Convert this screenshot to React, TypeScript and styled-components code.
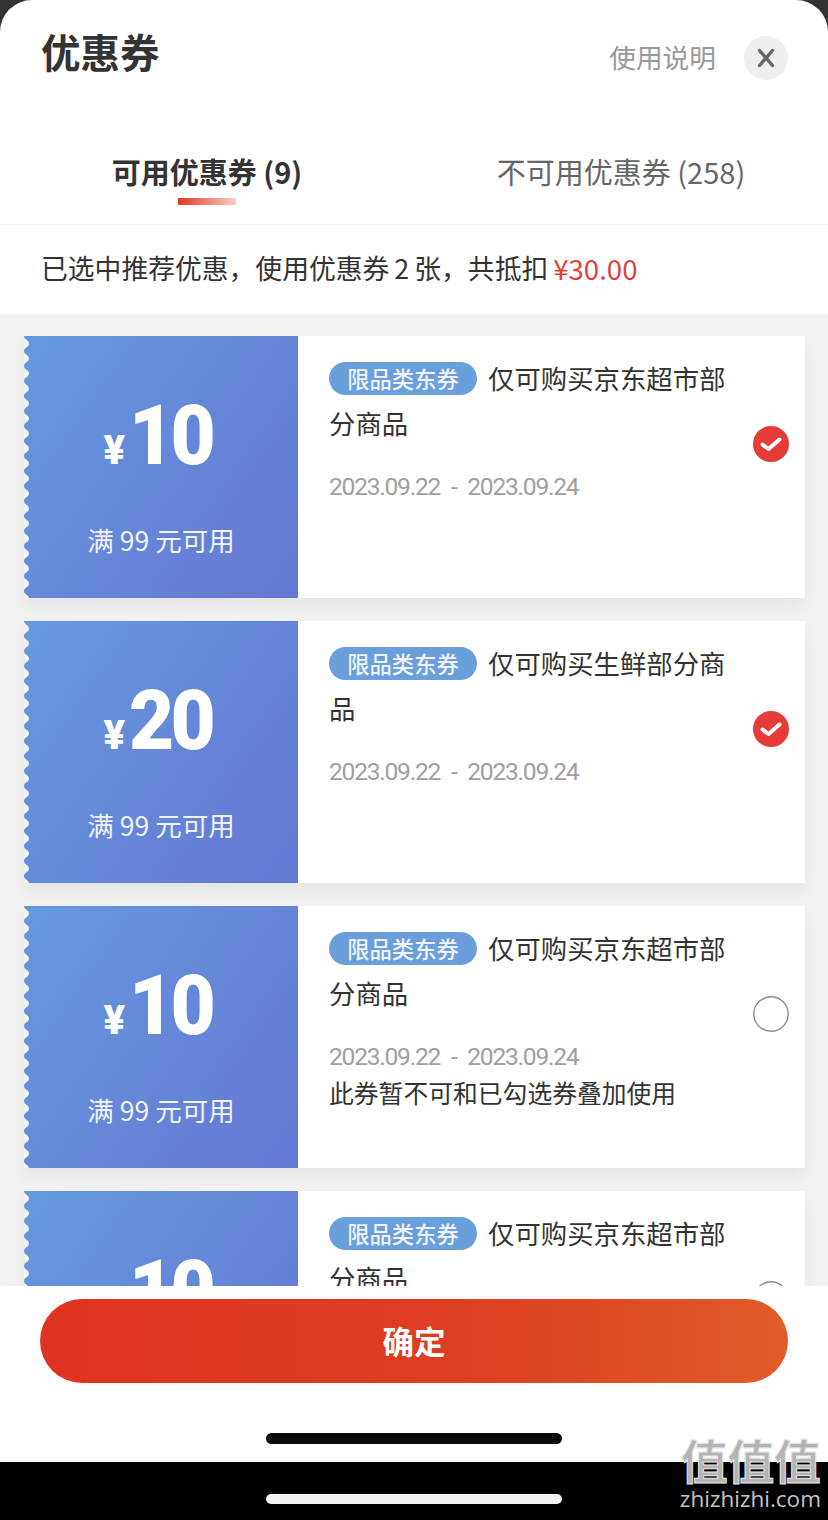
import React, {useId} from 'react'
import styled, {createGlobalStyle} from 'styled-components'

const cjk = '"Noto Sans CJK SC", "Noto Sans", sans-serif'

type couponTypes = {
	amount: string
	scope: string
	checked: boolean
	note?: string
}

const coupons: couponTypes[] = [
	{amount: '10', scope: '仅可购买京东超市部分商品', checked: true},
	{amount: '20', scope: '仅可购买生鲜部分商品', checked: true},
	{amount: '10', scope: '仅可购买京东超市部分商品', checked: false, note: '此券暂不可和已勾选券叠加使用'},
	{amount: '10', scope: '仅可购买京东超市部分商品', checked: false},
]

// wavy perforated edge of the coupon stub
const ScallopEdge = () => {
	const id = useId()
	return (
		<Scallop width="7" height="262">
			<defs>
				<pattern id={id} width="7" height="15" patternUnits="userSpaceOnUse">
					<path d="M0 0 C0 3.75 5 3.75 5 7.5 C5 11.25 0 11.25 0 15 Z" fill="#f3f3f3" />
				</pattern>
			</defs>
			<rect width="7" height="262" fill={`url(#${id})`} />
		</Scallop>
	)
}

const App = () => {
	return (
		<Screen>
			<GlobalStyle />
			<Sheet>
				<Header>
					<Title>优惠券</Title>
					<HeaderRight>
						<HelpLink>使用说明</HelpLink>
						<CloseButton>
							<svg width="20" height="20" viewBox="0 0 20 20">
								<path d="M3.5 2.5 L16.5 17.5 M16.5 2.5 L3.5 17.5" stroke="#666" strokeWidth="3.4" strokeLinecap="round" />
							</svg>
						</CloseButton>
					</HeaderRight>
				</Header>
				<Tabs>
					<Tab $active>
						<TabLabel $active>可用优惠券 (9)</TabLabel>
						<TabMark />
					</Tab>
					<Tab>
						<TabLabel>不可用优惠券 (258)</TabLabel>
					</Tab>
				</Tabs>
				<Notice>
					已选中推荐优惠，使用优惠券 2 张，共抵扣<Price>¥30.00</Price>
				</Notice>
				<List>
					{coupons.map((coupon, i) => (
						<Coupon key={i}>
							<Stub>
								<ScallopEdge />
								<Amount>
									<Yen>¥</Yen>
									<Value>{coupon.amount}</Value>
								</Amount>
								<Condition>满 99 元可用</Condition>
							</Stub>
							<Details>
								<Info>
									<Scope>
										<Tag>限品类东券</Tag>
										{coupon.scope}
									</Scope>
									<Dates>2023.09.22 - 2023.09.24</Dates>
									{coupon.note && <Note>{coupon.note}</Note>}
								</Info>
								{coupon.checked ? (
									<RadioIcon viewBox="0 0 36 36">
										<circle cx="18" cy="18" r="18" fill="#e53b39" />
										<path d="M9.5 18.5 L15.5 23 L26.5 13.5" fill="none" stroke="#fff" strokeWidth="4" strokeLinecap="round" strokeLinejoin="round" />
									</RadioIcon>
								) : (
									<RadioIcon viewBox="0 0 36 36">
										<circle cx="18" cy="18" r="17.2" fill="#fff" stroke="#8f8f8f" strokeWidth="1.4" />
									</RadioIcon>
								)}
							</Details>
						</Coupon>
					))}
				</List>
				<Footer>
					<Confirm>确定</Confirm>
					<HomeBar />
				</Footer>
			</Sheet>
			<BottomStrip>
				<StripBar />
			</BottomStrip>
			<Watermark>
				<WatermarkMark>值值值</WatermarkMark>
				<WatermarkUrl>zhizhizhi.com</WatermarkUrl>
			</Watermark>
		</Screen>
	)
}

export default App

const GlobalStyle = createGlobalStyle`
	html, body {
		margin: 0;
		padding: 0;
		background: #000;
	}
	* {
		box-sizing: border-box;
	}
`

const Screen = styled.div`
	position: relative;
	width: 828px;
	height: 1520px;
	display: flex;
	flex-direction: column;
	overflow: hidden;
	background: #333;
	font-family: ${cjk};
`

const Sheet = styled.div`
	height: 1462px;
	display: flex;
	flex-direction: column;
	background: #fff;
	border-radius: 32px 32px 0 0;
	overflow: hidden;
`

const Header = styled.div`
	height: 116px;
	flex-shrink: 0;
	display: flex;
	justify-content: space-between;
	align-items: flex-start;
	padding: 0 40px 0 41px;
`

const Title = styled.h1`
	margin: 27px 0 0;
	font-size: 39.5px;
	line-height: 48px;
	font-weight: 700;
	color: #333;
`

const HeaderRight = styled.div`
	margin-top: 36px;
	display: flex;
	align-items: center;
	gap: 28px;
`

const HelpLink = styled.span`
	font-size: 26.7px;
	line-height: 42px;
	padding-bottom: 2px;
	color: #999;
`

const CloseButton = styled.div`
	width: 44px;
	height: 44px;
	border-radius: 50%;
	background: #efefef;
	display: flex;
	align-items: center;
	justify-content: center;
`

const Tabs = styled.div`
	height: 109px;
	flex-shrink: 0;
	display: grid;
	grid-template-columns: 1fr 1fr;
	border-bottom: 1px solid #f6f6f6;
`

const Tab = styled.div<{$active?: boolean}>`
	display: flex;
	flex-direction: column;
	align-items: center;
	padding-top: 37px;
`

const TabLabel = styled.span<{$active?: boolean}>`
	font-size: 29px;
	line-height: 36px;
	font-weight: ${(p) => (p.$active ? 700 : 400)};
	color: ${(p) => (p.$active ? '#333' : '#666')};
`

const TabMark = styled.i`
	display: block;
	width: 58px;
	height: 7px;
	margin-top: 9px;
	background: linear-gradient(90deg, #e0381f, #f9cfc8);
`

const Notice = styled.div`
	height: 89px;
	flex-shrink: 0;
	display: flex;
	align-items: center;
	padding: 0 0 4px 41px;
	font-size: 26.8px;
	color: #333;
	white-space: pre;
	word-spacing: -1px;
`

const Price = styled.span`
	margin-left: 5px;
	font-size: 27.6px;
	color: #e2403a;
`

const List = styled.div`
	flex: 1;
	min-height: 0;
	overflow: hidden;
	display: flex;
	flex-direction: column;
	gap: 23px;
	padding: 22px 23px 0 24px;
	background: #f2f2f2;
`

const Coupon = styled.div`
	height: 262px;
	flex-shrink: 0;
	display: flex;
	background: #fff;
	box-shadow: 0 8px 14px rgba(0, 0, 0, 0.05);
`

const Stub = styled.div`
	position: relative;
	width: 274px;
	flex-shrink: 0;
	display: flex;
	flex-direction: column;
	align-items: center;
	color: #fff;
	background: linear-gradient(125deg, #6499de 0%, #6577d3 100%);
`

const Scallop = styled.svg`
	position: absolute;
	left: 0;
	top: 0;
`

const Amount = styled.div`
	height: 186px;
	display: flex;
	align-items: baseline;
	justify-content: center;
	padding-top: 58px;
	margin-left: -6px;
`

const Yen = styled.span`
	font-family: Roboto, sans-serif;
	font-size: 40px;
	line-height: 84px;
	font-weight: 900;
	margin-right: 4px;
`

const Value = styled.span`
	display: inline-block;
	font-family: Roboto, sans-serif;
	font-size: 84px;
	line-height: 84px;
	font-weight: 900;
	letter-spacing: -4px;
	transform: scaleX(0.93);
	transform-origin: left center;
	margin-right: -6px;
`

const Condition = styled.div`
	font-size: 26.5px;
	line-height: 36px;
	color: #f0f3fb;
	white-space: pre;
`

const Details = styled.div`
	flex: 1;
	display: flex;
	align-items: flex-start;
	padding-right: 16px;
`

const Info = styled.div`
	flex: 1;
	padding: 19px 8px 0 31px;
`

const Scope = styled.div`
	font-size: 26.4px;
	line-height: 45px;
	color: #333;
`

const Tag = styled.span`
	display: inline-block;
	width: 148px;
	height: 33px;
	margin-right: 11px;
	border-radius: 17px;
	background: #6a9fdc;
	color: #eef4fc;
	font-size: 22.3px;
	font-weight: 500;
	line-height: 33px;
	text-align: center;
	vertical-align: 1px;
`

const Dates = styled.div`
	margin-top: 27px;
	font-family: Roboto, "Noto Sans", sans-serif;
	font-size: 24.6px;
	line-height: 30px;
	letter-spacing: -1.25px;
	word-spacing: 6px;
	color: #a0a0a0;
`

const Note = styled.div`
	margin-top: 3px;
	font-size: 24.8px;
	line-height: 34px;
	color: #333;
`

const RadioIcon = styled.svg`
	width: 36px;
	height: 36px;
	margin-top: 90px;
	flex-shrink: 0;
`

const Footer = styled.div`
	height: 176px;
	flex-shrink: 0;
	display: flex;
	flex-direction: column;
	align-items: center;
	padding-top: 13px;
	background: #fff;
`

const Confirm = styled.div`
	width: 748px;
	height: 84px;
	padding-bottom: 3px;
	border-radius: 42px;
	display: flex;
	align-items: center;
	justify-content: center;
	background: linear-gradient(90deg, #df3320 0%, #dd3e22 55%, #e05c2a 100%);
	color: #fff;
	font-size: 31.5px;
	font-weight: 700;
`

const HomeBar = styled.div`
	width: 296px;
	height: 11px;
	margin-top: 50px;
	border-radius: 6px;
	background: #0a0a0a;
`

const BottomStrip = styled.div`
	flex: 1;
	display: flex;
	justify-content: center;
	padding-top: 32px;
	background: #000;
`

const StripBar = styled.div`
	width: 296px;
	height: 10px;
	border-radius: 5px;
	background: #f2f2f2;
`

const Watermark = styled.div`
	position: absolute;
	right: 7px;
	bottom: 7px;
	display: flex;
	flex-direction: column;
	align-items: center;
`

const WatermarkMark = styled.div`
	font-size: 47px;
	line-height: 52px;
	font-weight: 700;
	color: #b4b4b4;
	-webkit-text-stroke: 1px #e8e8e8;
	letter-spacing: -0.5px;
`

const WatermarkUrl = styled.div`
	font-family: "Open Sans", sans-serif;
	font-size: 22.5px;
	line-height: 28px;
	color: #c4c4c4;
`
